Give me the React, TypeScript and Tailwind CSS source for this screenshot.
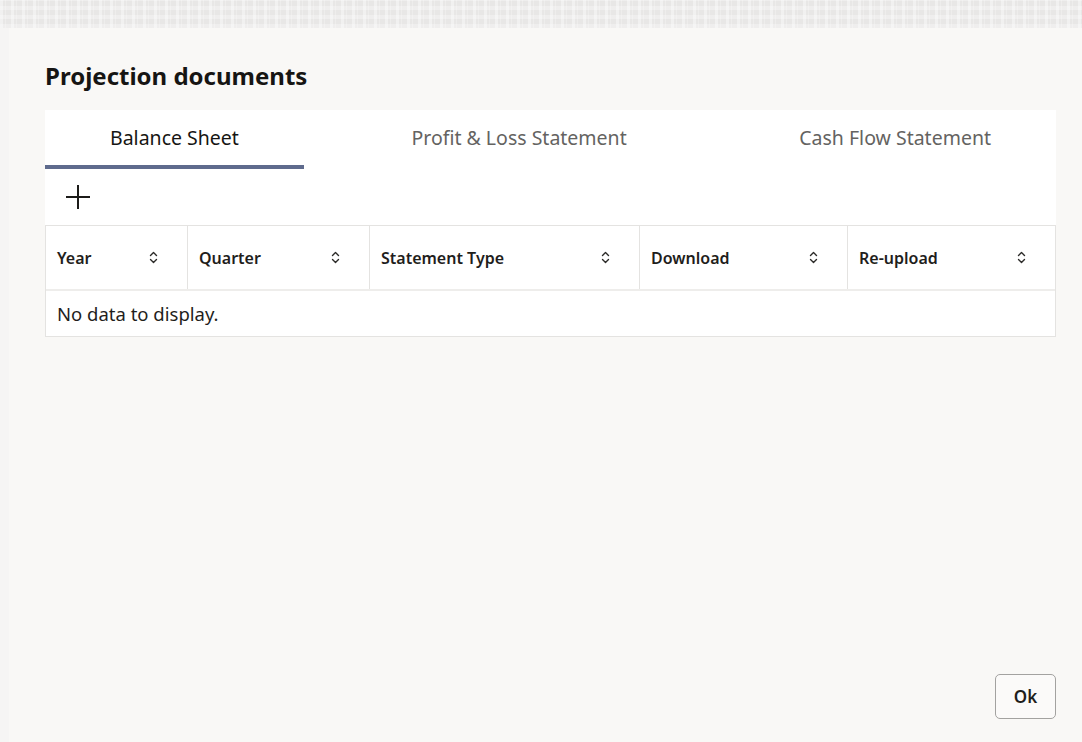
import React from "react";

const font = { fontFamily: '"Noto Sans", "Open Sans", Arial, sans-serif' };

function SortIcon() {
  return (
    <svg width="9" height="13" viewBox="0 0 9 13" fill="none" className="shrink-0">
      <path d="M1.5 4.5 L4.5 1.5 L7.5 4.5" stroke="#2b2a28" strokeWidth="1.4" strokeLinecap="round" strokeLinejoin="round" />
      <path d="M1.5 8.5 L4.5 11.5 L7.5 8.5" stroke="#2b2a28" strokeWidth="1.4" strokeLinecap="round" strokeLinejoin="round" />
    </svg>
  );
}

function PlusIcon() {
  return (
    <svg width="26" height="26" viewBox="0 0 26 26" fill="none">
      <path d="M13 1 V25 M1 13 H25" stroke="#1c1b19" strokeWidth="2" />
    </svg>
  );
}

const columns = [
  { label: "Year", w: "w-[142px]" },
  { label: "Quarter", w: "w-[182px]" },
  { label: "Statement Type", w: "w-[270px]" },
  { label: "Download", w: "w-[208px]" },
  { label: "Re-upload", w: "flex-1" },
];

export default function App() {
  return (
    <div className="w-[1082px] h-[742px] flex flex-col bg-[#f3f2f1] overflow-hidden" style={font}>
      {/* textured band of the page behind the dialog */}
      <div
        className="h-[28px] shrink-0 bg-[#e8e7e6]"
        style={{
          backgroundImage:
            "repeating-linear-gradient(90deg, rgba(255,255,255,0.4) 0px, rgba(255,255,255,0.4) 3px, transparent 3px, transparent 5px, rgba(255,255,255,0.25) 5px, rgba(255,255,255,0.25) 6px, transparent 6px, transparent 11px), repeating-linear-gradient(0deg, rgba(255,255,255,0.3) 0px, rgba(255,255,255,0.3) 4px, transparent 4px, transparent 9px)",
        }}
      />
      <div className="flex-1 flex">
        <div className="w-[9px] shrink-0 bg-[#f6f5f4]" />
        <div className="flex-1 bg-[#f9f8f6] flex flex-col pl-[36px] pr-[26px]">
          <h1 className="mt-[31px] mb-[18px] h-[33px] text-[24px] leading-[33px] font-bold text-[#161513]">
            Projection documents
          </h1>

          <div className="bg-white flex flex-col">
            <div className="flex justify-between h-[59px]">
              <div className="px-[65px] flex items-center justify-center border-b-4 border-[#5f6b8d] text-[19.5px] text-[#161513]">
                Balance Sheet
              </div>
              <div className="px-[65px] flex items-center justify-center border-b-4 border-transparent text-[19.5px] text-[#646361]">
                Profit &amp; Loss Statement
              </div>
              <div className="px-[65px] flex items-center justify-center border-b-4 border-transparent text-[19.5px] text-[#646361]">
                Cash Flow Statement
              </div>
            </div>
            <div className="h-[56px] flex items-center pl-[20px]">
              <PlusIcon />
            </div>
          </div>

          <div className="border border-[#e4e3e1] bg-white">
            <div className="flex h-[65px] border-b-2 border-[#eeedeb]">
              {columns.map((c, i) => (
                <div
                  key={c.label}
                  className={`${c.w} flex items-center justify-between pl-[11px] pr-[29px] ${i < columns.length - 1 ? "border-r border-[#e4e3e1]" : ""}`}
                >
                  <span className="text-[16px] font-semibold text-[#1f1e1c]">{c.label}</span>
                  <SortIcon />
                </div>
              ))}
            </div>
            <div className="h-[45px] flex items-center pl-[11px] text-[18.5px] text-[#1f1e1c]">
              No data to display.
            </div>
          </div>

          <div className="flex-1" />
          <div className="flex justify-end mb-[23px]">
            <button className="w-[61px] h-[45px] rounded-[5px] border border-[#a3a2a0] bg-[#fbfaf9] text-[17px] font-semibold text-[#1f1e1c]">
              Ok
            </button>
          </div>
        </div>
      </div>
    </div>
  );
}
